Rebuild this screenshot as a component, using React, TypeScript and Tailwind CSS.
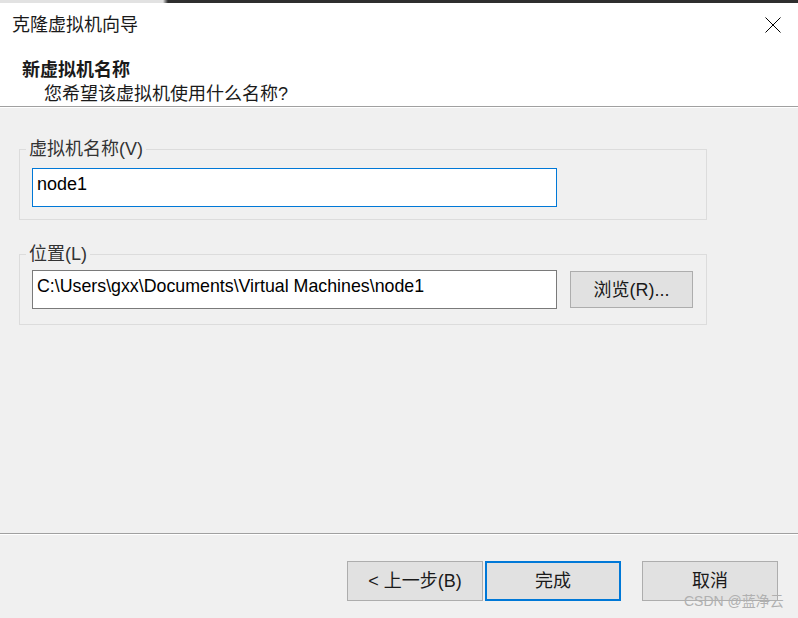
import React from "react";

export default function App() {
  return (
    <div className="w-[798px] h-[618px] flex flex-col bg-[#f0f0f0] text-[18px] text-[#1a1a1a] font-[family-name:'Liberation_Sans','Noto_Sans_CJK_SC',sans-serif] relative overflow-hidden">
      {/* top strip */}
      <div className="h-[3px] flex shrink-0">
        <div className="w-[163px] bg-[#e2e2e2]" />
        <div className="w-[5px] bg-gradient-to-r from-[#e2e2e2] to-[#2e2e2e]" />
        <div className="flex-1 bg-[#2e2e2e]" />
      </div>

      {/* header */}
      <div className="h-[103px] bg-white shrink-0 flex flex-col">
        <div className="mt-[10px] h-[24px] flex items-center justify-between pl-[12px] pr-[17px]">
          <span className="leading-[24px]">克隆虚拟机向导</span>
          <svg width="16" height="16" viewBox="0 0 16 16" className="block">
            <path d="M0.5 0.5 L15.5 15.5 M15.5 0.5 L0.5 15.5" stroke="#000" strokeWidth="1" fill="none" />
          </svg>
        </div>
        <div className="mt-[21px] h-[24px] leading-[24px] pl-[22px] font-bold">新虚拟机名称</div>
        <div className="h-[24px] leading-[24px] pl-[44px]">您希望该虚拟机使用什么名称?</div>
      </div>
      <div className="h-px bg-[#a0a0a0] shrink-0" />
      <div className="h-px bg-white shrink-0" />

      {/* body */}
      <div className="flex-1 flex flex-col pt-[31px]">
        <fieldset className="ml-[19px] w-[688px] border border-[#dcdcdc] px-0 pt-[9px] pb-[12px] m-0">
          <legend className="ml-[6px] px-[3px] leading-[20px] text-[#333]">虚拟机名称(V)</legend>
          <div className="pl-[12px]">
            <div className="w-[525px] h-[39px] bg-white border border-[#0078d7] pl-[4px] pt-[3px] leading-[24px] text-black">
              node1
            </div>
          </div>
        </fieldset>

        <fieldset className="ml-[19px] mt-[24px] w-[688px] border border-[#dcdcdc] px-0 pt-[6px] pb-[15px] m-0">
          <legend className="ml-[6px] px-[3px] leading-[20px] text-[#333]">位置(L)</legend>
          <div className="pl-[12px] flex items-center">
            <div className="w-[525px] h-[39px] bg-white border border-[#7a7a7a] pl-[4px] pt-[3px] leading-[24px] text-[17.8px] text-black whitespace-nowrap overflow-hidden">
              C:\Users\gxx\Documents\Virtual Machines\node1
            </div>
            <div className="ml-[13px] w-[123px] h-[37px] bg-[#e1e1e1] border border-[#adadad] flex items-center justify-center leading-[24px]">
              浏览(R)...
            </div>
          </div>
        </fieldset>
      </div>

      {/* footer */}
      <div className="h-px bg-[#a0a0a0] shrink-0" />
      <div className="h-px bg-white shrink-0" />
      <div className="h-[83px] shrink-0 flex items-start justify-end pt-[26px] pr-[20px]">
        <div className="w-[136px] h-[40px] bg-[#e1e1e1] border border-[#adadad] flex items-center justify-center leading-[24px]">
          &lt; 上一步(B)
        </div>
        <div className="ml-[2px] w-[136px] h-[40px] bg-[#e1e1e1] border-2 border-[#0078d7] flex items-center justify-center leading-[24px]">
          完成
        </div>
        <div className="ml-[21px] w-[136px] h-[40px] bg-[#e1e1e1] border border-[#adadad] flex items-center justify-center leading-[24px]">
          取消
        </div>
      </div>

      {/* watermark */}
      <div className="absolute left-[684px] top-[592px] text-[14px] leading-[18px] text-[#b0b0b0] whitespace-nowrap">
        CSDN @蓝净云
      </div>
    </div>
  );
}
